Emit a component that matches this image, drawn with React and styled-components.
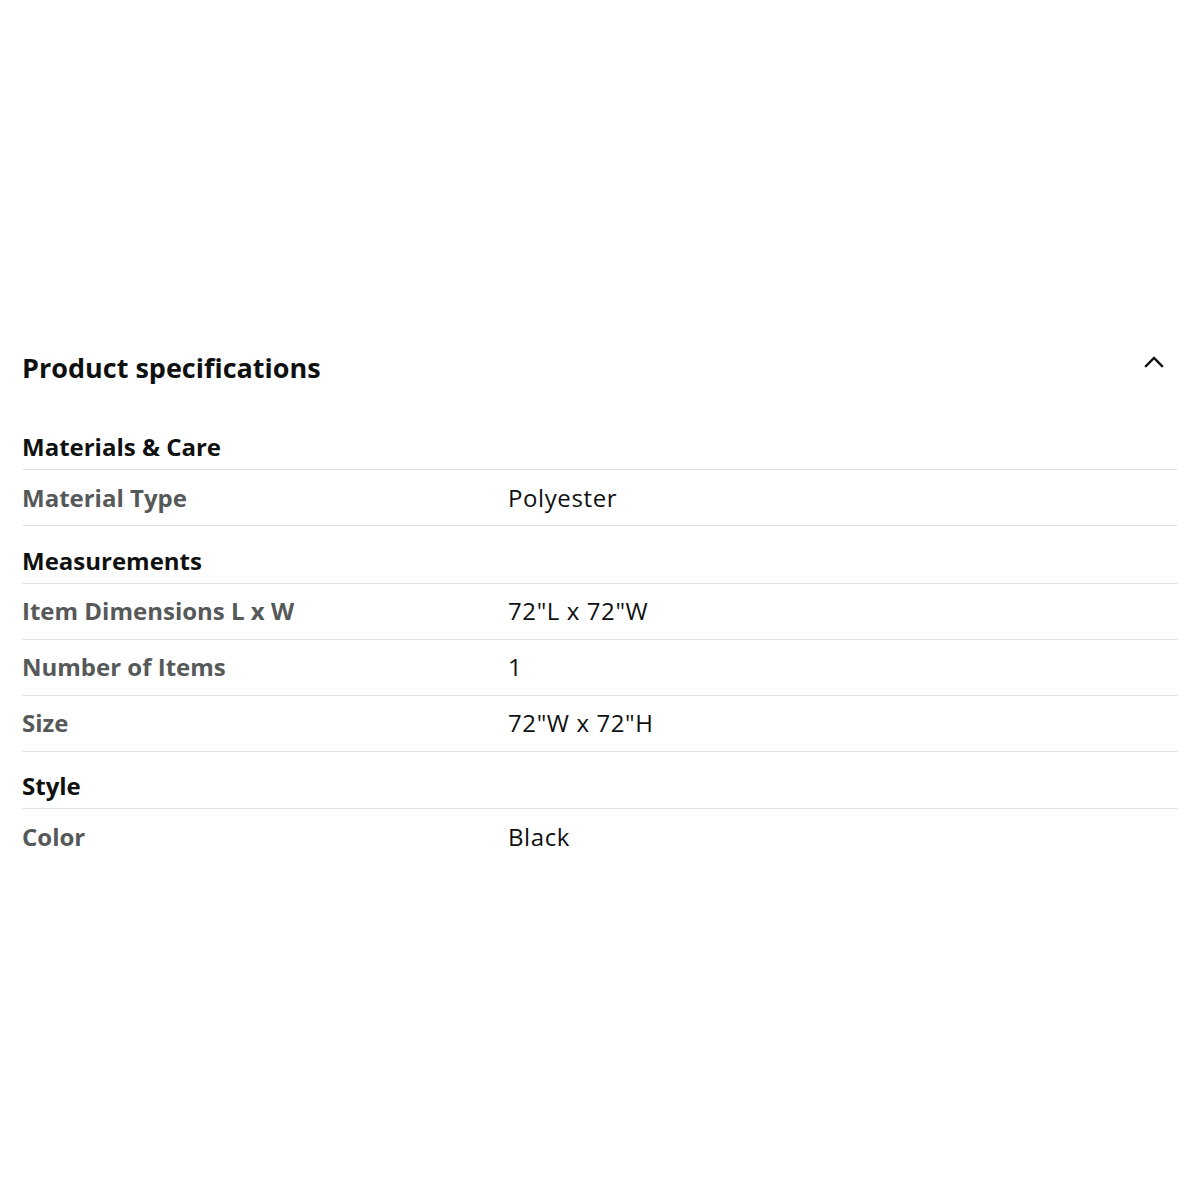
import React from "react";
import styled, { createGlobalStyle } from "styled-components";

const Global = createGlobalStyle`
  html, body { margin: 0; padding: 0; background: #fff; }
  body { font-family: "Open Sans", "Liberation Sans", sans-serif; color: #0f1111; }
`;

const Page = styled.div`
  width: 1200px;
  height: 1200px;
  box-sizing: border-box;
  padding: 340px 22px 0 22px;
`;

const Header = styled.div`
  display: flex;
  align-items: center;
  justify-content: space-between;
  height: 54px;
`;

const Title = styled.h2`
  margin: 0;
  font-size: 27px;
  font-weight: 700;
  color: #0f1111;
`;

const Chevron = styled.svg`
  width: 24px;
  height: 24px;
  margin-right: 12px;
  margin-top: -10px;
`;

const Sections = styled.div`
  margin-top: 40px;
  display: flex;
  flex-direction: column;
`;

const SectionTitle = styled.div`
  height: ${(p) => (p.$first ? "36px" : "57.5px")};
  display: flex;
  align-items: flex-end;
  padding-bottom: 6px;
  box-sizing: border-box;
  font-size: 24px;
  line-height: 32px;
  font-weight: 700;
  color: #0f1111;
  border-bottom: 1.5px solid #e3e3e3;
`;

const Row = styled.div`
  display: grid;
  grid-template-columns: 486px 1fr;
  align-items: center;
  height: 56px;
  box-sizing: border-box;
  border-bottom: ${(p) => (p.$last ? "none" : "1.5px solid #e3e3e3")};
  font-size: 24px;
  line-height: 32px;
`;

const Label = styled.div`
  font-weight: 700;
  color: #565959;
`;

const Value = styled.div`
  font-weight: 400;
  color: #0f1111;
  letter-spacing: 0.6px;
`;

const data = [
  { title: "Materials & Care", rows: [["Material Type", "Polyester"]] },
  {
    title: "Measurements",
    rows: [
      ["Item Dimensions L x W", '72"L x 72"W'],
      ["Number of Items", "1"],
      ["Size", '72"W x 72"H'],
    ],
  },
  { title: "Style", rows: [["Color", "Black"]] },
];

export default function App() {
  return (
    <>
      <Global />
      <Page>
        <Header>
          <Title>Product specifications</Title>
          <Chevron viewBox="0 0 24 24" fill="none" stroke="#0f1111" strokeWidth="2.4" strokeLinecap="square">
            <path d="M4 16 L12 8 L20 16" />
          </Chevron>
        </Header>
        <Sections>
          {data.map((s, si) => (
            <React.Fragment key={s.title}>
              <SectionTitle $first={si === 0}>{s.title}</SectionTitle>
              {s.rows.map((r, ri) => (
                <Row key={r[0]} $last={si === data.length - 1 && ri === s.rows.length - 1}>
                  <Label>{r[0]}</Label>
                  <Value>{r[1]}</Value>
                </Row>
              ))}
            </React.Fragment>
          ))}
        </Sections>
      </Page>
    </>
  );
}
